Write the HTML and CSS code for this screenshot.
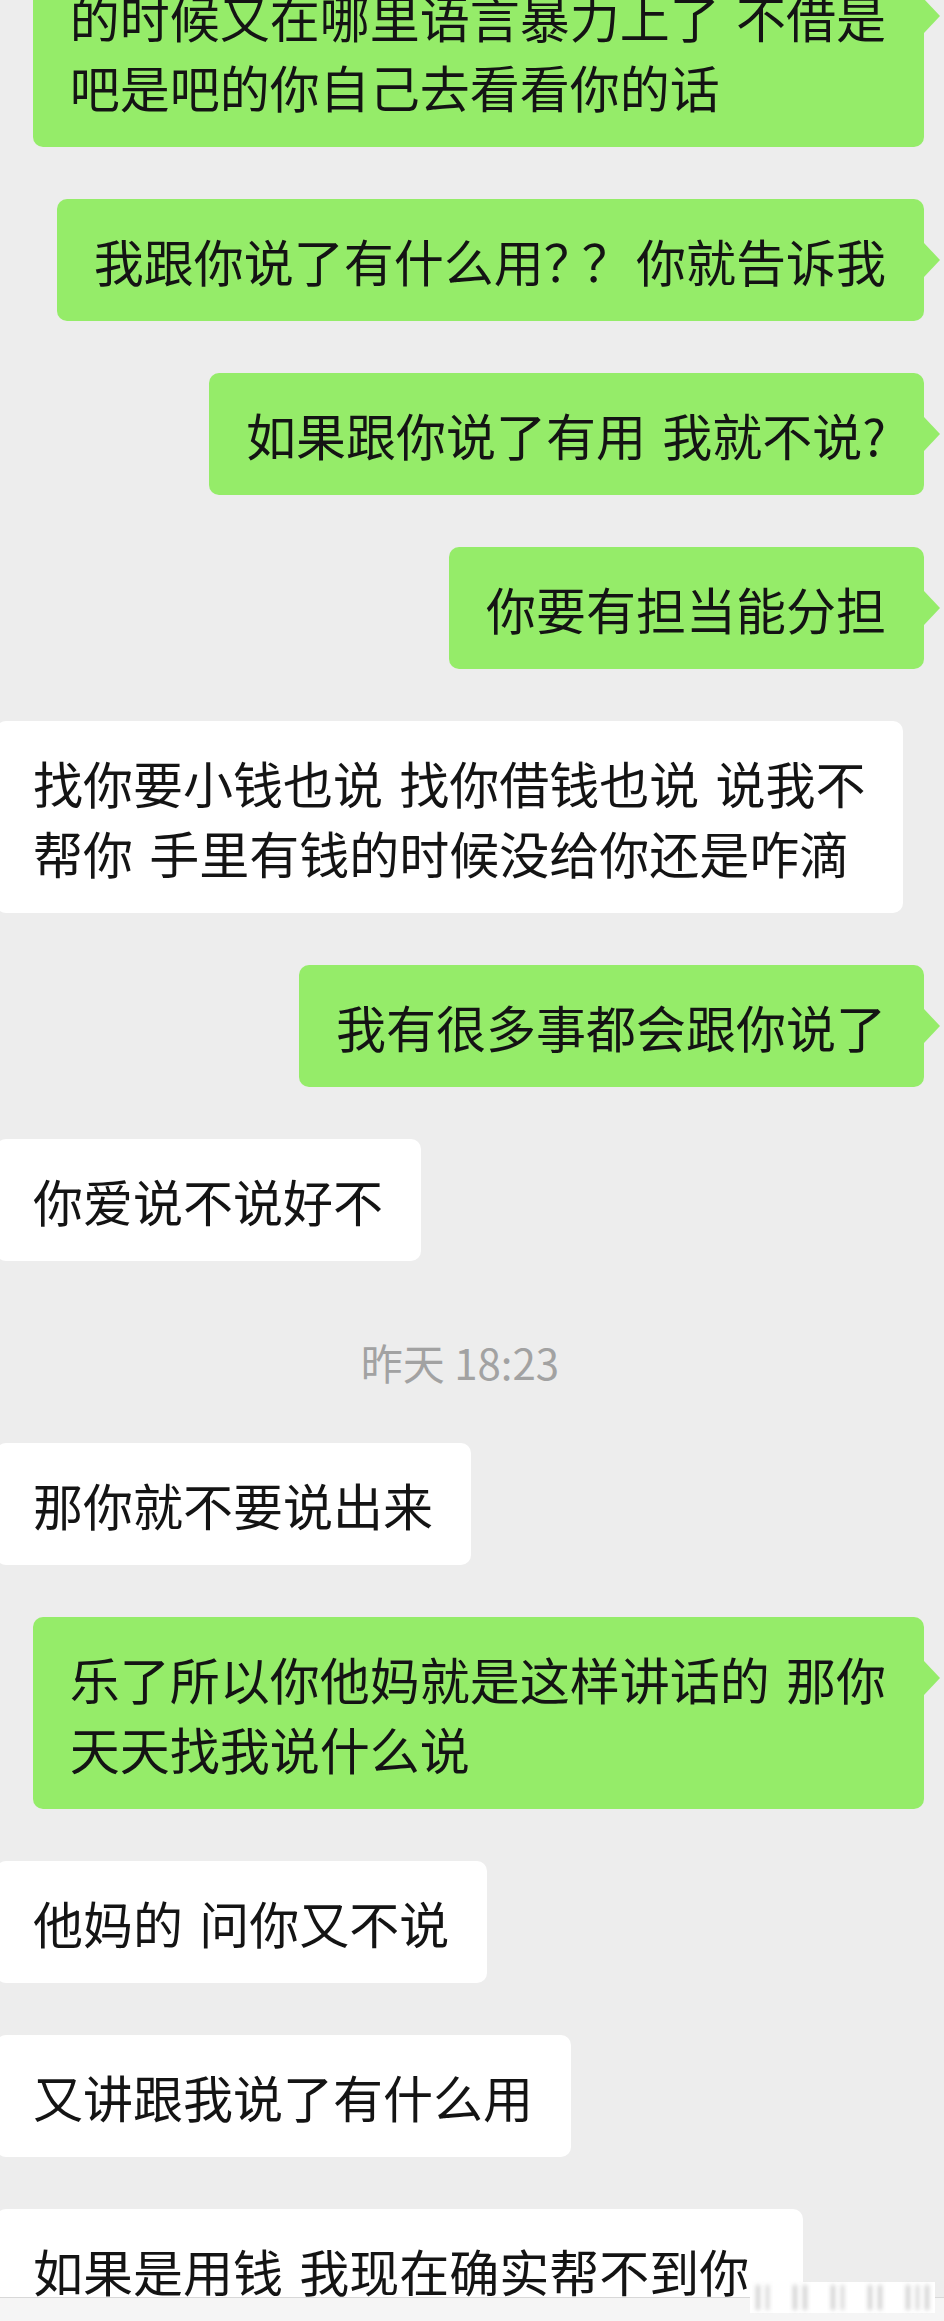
FILE: index.html
```html
<!DOCTYPE html>
<html>
	<head>
		<meta charset="UTF-8">
		<title>聊天记录</title>
		<link rel="stylesheet" href="styles.css">
	</head>
	<body>
		<div id="screen">
			<div id="chat">
				<div class="row me first"><div class="bubble green">的时候又在哪里语言暴力上了 不借是<br>吧是吧的你自己去看看你的话</div></div>
				<div class="row me"><div class="bubble green">我跟你说了有什么用<span class="q">？？</span> 你就告诉我</div></div>
				<div class="row me"><div class="bubble green">如果跟你说了有用 我就不说?</div></div>
				<div class="row me"><div class="bubble green">你要有担当能分担</div></div>
				<div class="row you"><div class="bubble white">找你要小钱也说 找你借钱也说 说我不<br>帮你 手里有钱的时候没给你还是咋滴</div></div>
				<div class="row me"><div class="bubble green">我有很多事都会跟你说了</div></div>
				<div class="row you"><div class="bubble white">你爱说不说好不</div></div>
				<div class="time">昨天 18:23</div>
				<div class="row you"><div class="bubble white">那你就不要说出来</div></div>
				<div class="row me"><div class="bubble green">乐了所以你他妈就是这样讲话的 那你<br>天天找我说什么说</div></div>
				<div class="row you"><div class="bubble white">他妈的 问你又不说</div></div>
				<div class="row you"><div class="bubble white">又讲跟我说了有什么用</div></div>
				<div class="row you"><div class="bubble white last">如果是用钱 我现在确实帮不到你</div></div>
			</div>
			<div id="bar"></div>
			<div id="mark">
				<span></span><span></span>
				<span class="gap"></span><span></span><span></span>
				<span class="gap"></span><span></span><span></span>
				<span class="gap"></span><span></span><span></span>
				<span class="gap"></span><span></span><span></span><span></span>
			</div>
		</div>
	</body>
</html>
```

FILE: styles.css
```css
body{
	margin: 0;
	background-color: #ededed;
	font-family: "Noto Sans CJK SC", "Noto Sans", sans-serif;
}
#screen{
	position: relative;
	height: 2321px;
	overflow: hidden;
}
#chat{
	height: 2297px;
	overflow: hidden;
	display: flex;
	flex-direction: column;
	gap: 52px;
}
.row{
	display: flex;
	flex-shrink: 0;
}
.row.first{
	margin-top: -45px;
}
.me{
	justify-content: flex-end;
	padding-right: 20px;
}
.you{
	margin-left: -4px;
}
.bubble{
	position: relative;
	max-width: 925px;
	box-sizing: border-box;
	padding: 26px 38px 26px 37px;
	border-radius: 10px;
	font-size: 50px;
	line-height: 70px;
	word-spacing: 5px;
	color: #141414;
}
.green{
	background-color: #95ec69;
}
.green:after{
	content: "";
	position: absolute;
	left: 100%;
	top: 44px;
	border-left: 16px solid #95ec69;
	border-top: 17px solid transparent;
	border-bottom: 17px solid transparent;
}
.white{
	background-color: #fff;
}
.white.last{
	padding-right: 54px;
}
.q{
	letter-spacing: -12px;
}
.time{
	flex-shrink: 0;
	padding: 20px 24px 0 0;
	font-size: 42px;
	line-height: 58px;
	text-align: center;
	color: #a2a2a2;
}
#bar{
	height: 23px;
	border-top: 1px solid #d8d8d8;
	background-color: #f5f5f5;
}
#mark{
	position: absolute;
	right: 9px;
	bottom: 8px;
	width: 185px;
	height: 31px;
	box-sizing: border-box;
	padding: 3px 6px;
	display: flex;
	gap: 6px;
	background-color: #fff;
}
#mark span{
	width: 5px;
	height: 25px;
	background-color: #cfcfcf;
	filter: blur(2px);
}
#mark span.gap{
	width: 0;
	margin-left: 12px;
}
```
